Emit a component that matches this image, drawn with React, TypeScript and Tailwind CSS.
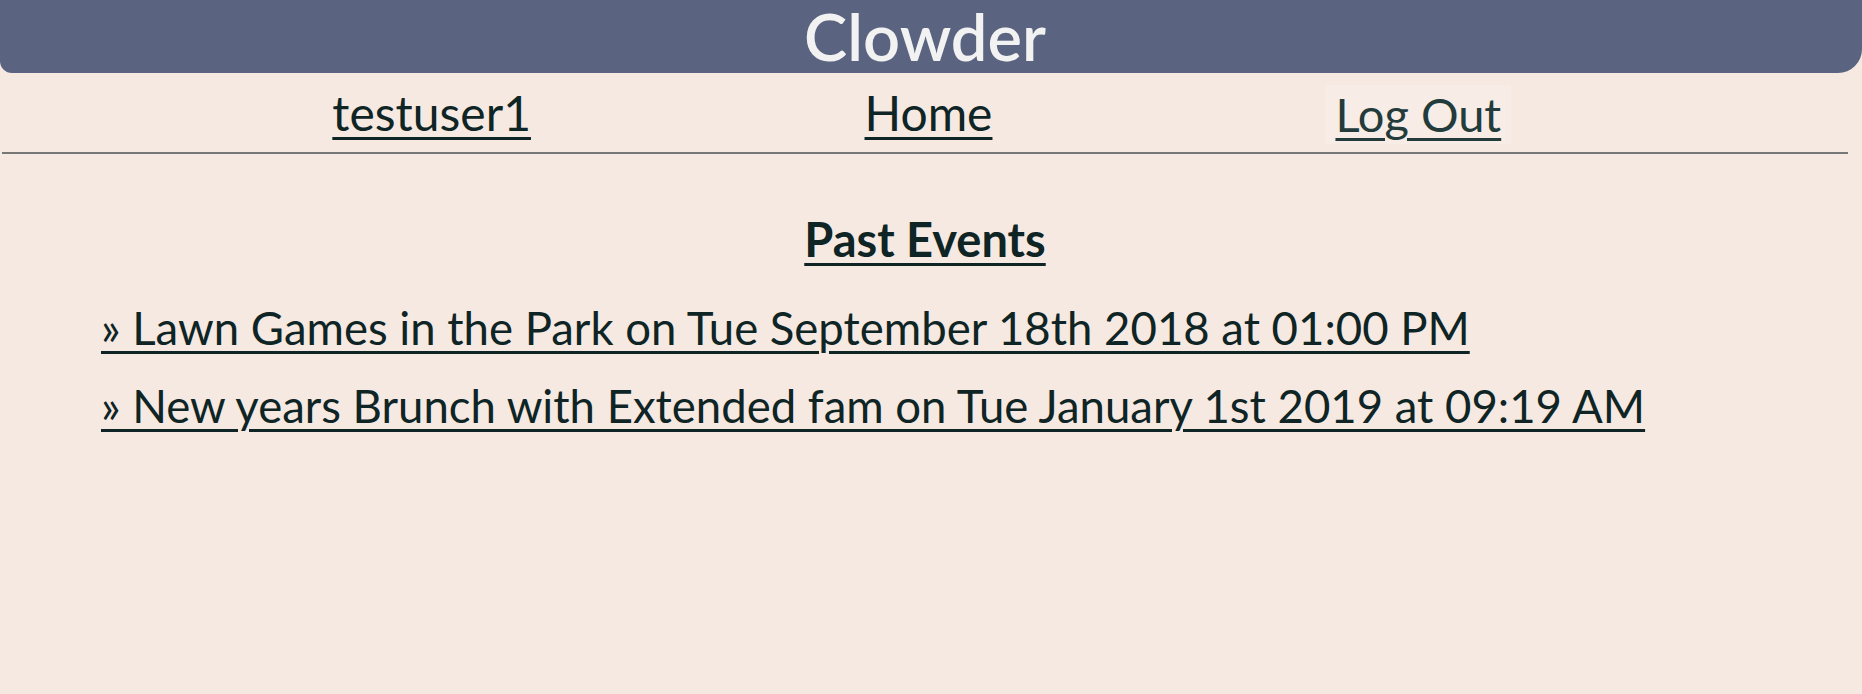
import React from "react";

export default function App() {
  const font = { fontFamily: "Lato, 'Open Sans', sans-serif" };
  return (
    <div className="min-h-[694px] w-full bg-[#f5e9e2] text-[#0f2424]" style={font}>
      <header className="flex h-[73px] items-center justify-center rounded-bl-[12px] rounded-br-[24px] bg-[#5a637f] pr-[12px]">
        <h1 className="text-[65px] font-semibold leading-none text-[#f2f2f2]">Clowder</h1>
      </header>
      <div className="pr-[12px]">
        <nav className="mx-auto grid h-[79px] w-[80%] grid-cols-3 items-start pt-[16px]">
          <div className="flex justify-center">
            <a href="#" className="text-[48px] leading-none underline decoration-[3px] underline-offset-[6px]">testuser1</a>
          </div>
          <div className="flex justify-center">
            <a href="#" className="ml-[7px] text-[48px] leading-none underline decoration-[3px] underline-offset-[6px]">Home</a>
          </div>
          <div className="flex justify-center">
            <button className="-mt-[4px] bg-[#f7ece6] px-[10px] py-[6px] text-[47px] leading-none text-[#233b3b] underline decoration-[3px] underline-offset-[6px]">Log Out</button>
          </div>
        </nav>
      </div>
      <div className="ml-[2px] h-[2px] w-[1846px] bg-[#777777]" />
      <main className="pr-[12px] pt-[62px]">
        <h2 className="text-center text-[47px] font-bold leading-none underline decoration-[3px] underline-offset-[6px]">Past Events</h2>
        <ul className="mt-[42px] flex flex-col gap-[32px] pl-[101px]">
          <li className="leading-none">
            <a href="#" className="text-[45.5px] leading-none underline decoration-[3px] underline-offset-[6px]">» Lawn Games in the Park on Tue September 18th 2018 at 01:00 PM</a>
          </li>
          <li className="leading-none">
            <a href="#" className="text-[45.5px] leading-none underline decoration-[3px] underline-offset-[6px]">» New years Brunch with Extended fam on Tue January 1st 2019 at 09:19 AM</a>
          </li>
        </ul>
      </main>
    </div>
  );
}
